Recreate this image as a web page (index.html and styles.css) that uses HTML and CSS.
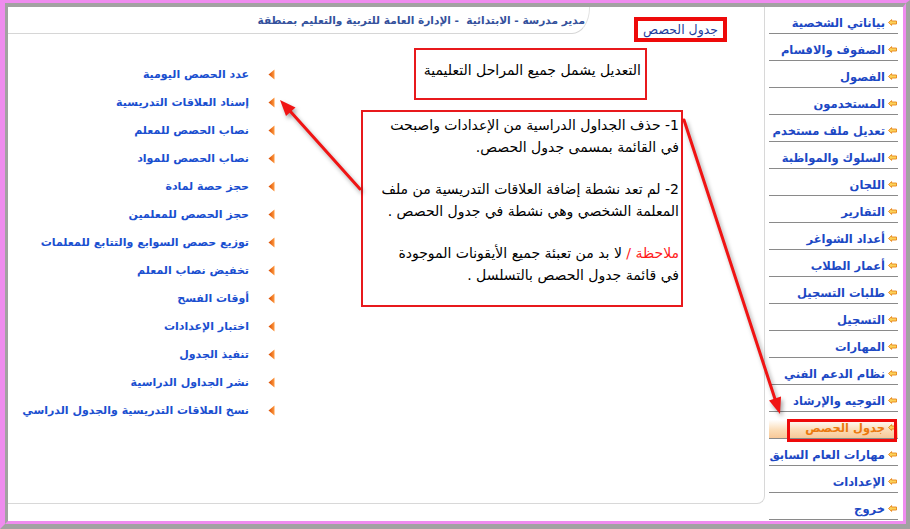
FILE: index.html
```html
<!DOCTYPE html>
<html lang="ar" dir="rtl">
<head>
<meta charset="utf-8">
<title>جدول الحصص</title>
<link rel="stylesheet" href="styles.css">
</head>
<body>
<svg class="defs" width="0" height="0" aria-hidden="true">
  <defs>
    <symbol id="sarrow" viewBox="0 0 9 7">
      <path d="M0.5,3.5 L3.6,0.6 L3.6,2 L8.5,2 L8.5,5 L3.6,5 L3.6,6.4 Z" fill="#fbd25a" stroke="#e8861a" stroke-width="0.9" stroke-linejoin="round"/>
    </symbol>
    <linearGradient id="bg" x1="0" y1="0" x2="1" y2="0">
      <stop offset="0" stop-color="#d84a00"/>
      <stop offset="1" stop-color="#ff9a40"/>
    </linearGradient>
    <symbol id="bullet" viewBox="0 0 7 11">
      <path d="M6.5,0.5 L0.5,5.5 L6.5,10.5 Z" fill="url(#bg)"/>
    </symbol>
  </defs>
</svg>
<div class="frame">
  <div class="inner">
    <aside class="side">
      <ul class="nav">
        <li><svg class="ic"><use href="#sarrow"/></svg><a>بياناتي الشخصية</a></li>
        <li><svg class="ic"><use href="#sarrow"/></svg><a>الصفوف والاقسام</a></li>
        <li><svg class="ic"><use href="#sarrow"/></svg><a>الفصول</a></li>
        <li><svg class="ic"><use href="#sarrow"/></svg><a>المستخدمون</a></li>
        <li><svg class="ic"><use href="#sarrow"/></svg><a>تعديل ملف مستخدم</a></li>
        <li><svg class="ic"><use href="#sarrow"/></svg><a>السلوك والمواظبة</a></li>
        <li><svg class="ic"><use href="#sarrow"/></svg><a>اللجان</a></li>
        <li><svg class="ic"><use href="#sarrow"/></svg><a>التقارير</a></li>
        <li><svg class="ic"><use href="#sarrow"/></svg><a>أعداد الشواغر</a></li>
        <li><svg class="ic"><use href="#sarrow"/></svg><a>أعمار الطلاب</a></li>
        <li><svg class="ic"><use href="#sarrow"/></svg><a>طلبات التسجيل</a></li>
        <li><svg class="ic"><use href="#sarrow"/></svg><a>التسجيل</a></li>
        <li><svg class="ic"><use href="#sarrow"/></svg><a>المهارات</a></li>
        <li><svg class="ic"><use href="#sarrow"/></svg><a>نظام الدعم الفني</a></li>
        <li><svg class="ic"><use href="#sarrow"/></svg><a>التوجيه والإرشاد</a></li>
        <li class="active"><svg class="ic"><use href="#sarrow"/></svg><a>جدول الحصص</a><span class="mark"></span></li>
        <li><svg class="ic"><use href="#sarrow"/></svg><a>مهارات العام السابق</a></li>
        <li><svg class="ic"><use href="#sarrow"/></svg><a>الإعدادات</a></li>
        <li><svg class="ic"><use href="#sarrow"/></svg><a>خروج</a></li>
      </ul>
    </aside>
    <main class="panel">
      <header class="head">
        <div class="title-cell"><span class="title">جدول الحصص</span></div>
        <div class="tab">مدير مدرسة - الابتدائية &nbsp;- الإدارة العامة للتربية والتعليم بمنطقة</div>
      </header>
      <div class="body">
        <section class="notes">
          <div class="box1">التعديل يشمل جميع المراحل التعليمية</div>
          <div class="box2">
            <p class="ln">1- حذف الجداول الدراسية من الإعدادات واصبحت</p>
            <p class="ln">في القائمة بمسمى جدول الحصص.</p>
            <p class="ln gap">2- لم تعد نشطة إضافة العلاقات التدريسية من ملف</p>
            <p class="ln">المعلمة الشخصي وهي نشطة في جدول الحصص .</p>
            <p class="ln gap"><span class="red">ملاحظة /</span> لا بد من تعبئة جميع الأيقونات الموجودة</p>
            <p class="ln">في قائمة جدول الحصص بالتسلسل .</p>
          </div>
        </section>
        <ul class="menu">
          <li><svg class="bl"><use href="#bullet"/></svg><a>عدد الحصص اليومية</a></li>
          <li><svg class="bl"><use href="#bullet"/></svg><a>إسناد العلاقات التدريسية</a></li>
          <li><svg class="bl"><use href="#bullet"/></svg><a>نصاب الحصص للمعلم</a></li>
          <li><svg class="bl"><use href="#bullet"/></svg><a>نصاب الحصص للمواد</a></li>
          <li><svg class="bl"><use href="#bullet"/></svg><a>حجز حصة لمادة</a></li>
          <li><svg class="bl"><use href="#bullet"/></svg><a>حجز الحصص للمعلمين</a></li>
          <li><svg class="bl"><use href="#bullet"/></svg><a>توزيع حصص السوابع والتتابع للمعلمات</a></li>
          <li><svg class="bl"><use href="#bullet"/></svg><a>تخفيض نصاب المعلم</a></li>
          <li><svg class="bl"><use href="#bullet"/></svg><a>أوقات الفسح</a></li>
          <li><svg class="bl"><use href="#bullet"/></svg><a>اختبار الإعدادات</a></li>
          <li><svg class="bl"><use href="#bullet"/></svg><a>تنفيذ الجدول</a></li>
          <li><svg class="bl"><use href="#bullet"/></svg><a>نشر الجداول الدراسية</a></li>
          <li><svg class="bl"><use href="#bullet"/></svg><a>نسخ العلاقات التدريسية والجدول الدراسي</a></li>
        </ul>
      </div>
    </main>
  </div>
</div>
<svg class="arrows" width="910" height="529" viewBox="0 0 910 529" aria-hidden="true">
  <g class="arr">
    <line x1="360" y1="189" x2="290" y2="111"/>
    <polygon points="280,100 295.5,107.5 286,116"/>
    <line x1="684" y1="120" x2="775" y2="399"/>
    <polygon points="780,414 781,396.5 769,400.5"/>
  </g>
</svg>
</body>
</html>
```

FILE: styles.css
```css
* { box-sizing: border-box; }
html, body { margin: 0; padding: 0; }
body {
  width: 910px;
  height: 529px;
  overflow: hidden;
  position: relative;
  background: #ffffff;
  font-family: "DejaVu Sans", "Noto Sans", sans-serif;
}
.defs { position: absolute; width: 0; height: 0; }
.frame {
  width: 910px;
  height: 529px;
  border-top: 3px solid #ef8cef;
  border-left: 5px solid #ef8cef;
  border-right: 4px solid #a2a2a2;
  border-bottom: 5px solid #a2a2a2;
}
.inner {
  height: 100%;
  display: flex;
  background: #fff;
  border-top: 4px solid #a2a2a2;
  border-right: 3px solid #ef8cef;
  border-left: 3px solid #a2a2a2;
  border-bottom: 3px solid #ef8cef;
}
/* sidebar */
.side {
  width: 138px;
  flex: none;
  padding: 0 5px 0 4px;
}
.nav { list-style: none; margin: 0; padding: 0; }
.nav li {
  position: relative;
  height: 27px;
  display: flex;
  align-items: flex-end;
  padding-bottom: 2px;
  border-bottom: 1px solid #8a8a8a;
}
.nav .ic { width: 9px; height: 7px; flex: none; margin: 0 1px 5px 3px; }
.nav a {
  font-size: 11.5px;
  font-weight: bold;
  line-height: 16px;
  color: #1c48c4;
  white-space: nowrap;
}
.nav li.active {
  background: linear-gradient(to bottom, #ffffff 0, #ffffff 30%, #fbdcb6 70%, #f8c998 100%);
}
.nav li.active a { color: #ea7a10; }
.nav .mark {
  position: absolute;
  top: 7px;
  right: 1px;
  left: 18px;
  bottom: -4px;
  border: 3px solid #ee0a0a;
}
/* panel */
.panel {
  width: 757px;
  height: 497px;
  flex: none;
  border-right: 1px solid #d8d8d8;
  border-bottom: 1px solid #d8d8d8;
  border-bottom-right-radius: 8px;
  display: flex;
  flex-direction: column;
}
.head {
  height: 27px;
  flex: none;
  display: flex;
}
.title-cell {
  width: 174px;
  flex: none;
  padding-right: 37px;
}
.title {
  display: inline-block;
  margin-top: 10px;
  border: 4px solid #ee0a0a;
  padding: 0 5px;
  height: 25px;
  line-height: 17px;
  font-size: 12.5px;
  color: #1e3c9c;
  white-space: nowrap;
}
.tab {
  flex: 1;
  border-bottom: 1px solid #d6d6d6;
  border-right: 1px solid #e2e2e2;
  border-bottom-right-radius: 18px 26px;
  padding-right: 4px;
  font-size: 10.6px;
  font-weight: bold;
  line-height: 26px;
  color: #34519c;
  white-space: nowrap;
}
.body {
  flex: 1;
  display: grid;
  grid-template-columns: 1fr 268px;
  align-items: start;
}
.notes {
  padding-top: 14px;
  display: flex;
  flex-direction: column;
  align-items: flex-start;
}
.box1 {
  width: 233px;
  height: 52px;
  margin-right: 117px;
  border: 2px solid #e8191c;
  padding: 10px 4px 0 0;
  font-size: 14px;
  line-height: 20px;
  color: #000;
  white-space: nowrap;
}
.box2 {
  width: 322px;
  height: 197px;
  margin-top: 10px;
  margin-right: 81px;
  border: 2px solid #e8191c;
  padding: 3px 2px 0 0;
}
.ln {
  margin: 0;
  font-size: 14px;
  line-height: 21.5px;
  color: #000;
  white-space: nowrap;
}
.ln.gap { margin-top: 21px; }
.red { color: #ff1a1a; }
.menu {
  list-style: none;
  margin: 0;
  padding: 26px 1px 0 0;
}
.menu li {
  height: 28px;
  display: flex;
  align-items: center;
  gap: 19px;
}
.menu .bl { width: 7px; height: 11px; flex: none; }
.menu a {
  font-size: 11px;
  font-weight: bold;
  color: #1a4fd0;
  white-space: nowrap;
}
/* annotation arrows */
.arrows {
  position: absolute;
  top: 0;
  left: 0;
  pointer-events: none;
  filter: drop-shadow(2px 3px 2px rgba(0, 0, 0, 0.35));
}
.arr line { stroke: #f01414; stroke-width: 3; stroke-linecap: round; }
.arr polygon { fill: #f01414; }
```
